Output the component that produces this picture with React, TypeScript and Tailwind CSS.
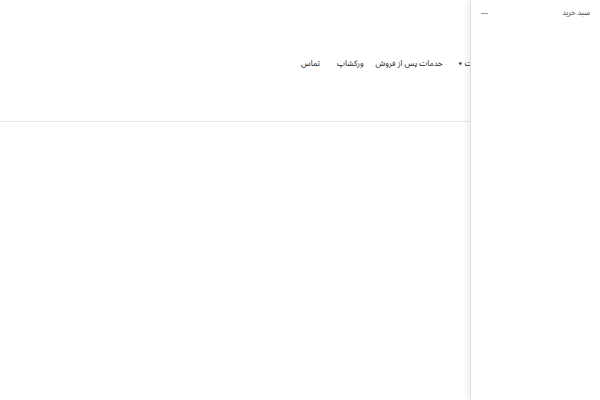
import React from 'react'

const menu = [
  { label: 'محصولات', dropdown: true, gap: 'ml-[16px]' },
  { label: 'خدمات پس از فروش', gap: 'ml-[12px]' },
  { label: 'ورکشاپ', gap: 'ml-[17px]' },
  { label: 'تماس', gap: '' },
]

export default function App() {
  return (
    <div className="relative h-[400px] w-[600px] overflow-hidden bg-white font-['Noto_Sans_Arabic','Noto_Sans','DejaVu_Sans',sans-serif] text-[#222]">
      {/* Header */}
      <header dir="rtl" className="flex h-[122px] items-center border-b border-[#e6e6e6] pr-[102px] pt-[7px]">
        <nav className="flex items-center text-[8px]">
          {menu.map((m) => (
            <a key={m.label} className={`flex items-center gap-[3px] ${m.gap}`}>
              {m.label}
              {m.dropdown && <span className="text-[4px]">▼</span>}
            </a>
          ))}
        </nav>
      </header>

      {/* Side cart drawer */}
      <aside
        dir="rtl"
        className="absolute right-0 top-0 h-full w-[130px] border-l border-[#e0e0e0] bg-white shadow-[-2px_0_6px_rgba(0,0,0,0.08)]"
      >
        <div className="flex items-center justify-between pl-[10px] pr-[10px] pt-[8px]">
          <span className="text-[7.5px] text-[#444]">سبد خرید</span>
          <span className="block h-px w-[7px] bg-[#999]" />
        </div>
      </aside>
    </div>
  )
}
